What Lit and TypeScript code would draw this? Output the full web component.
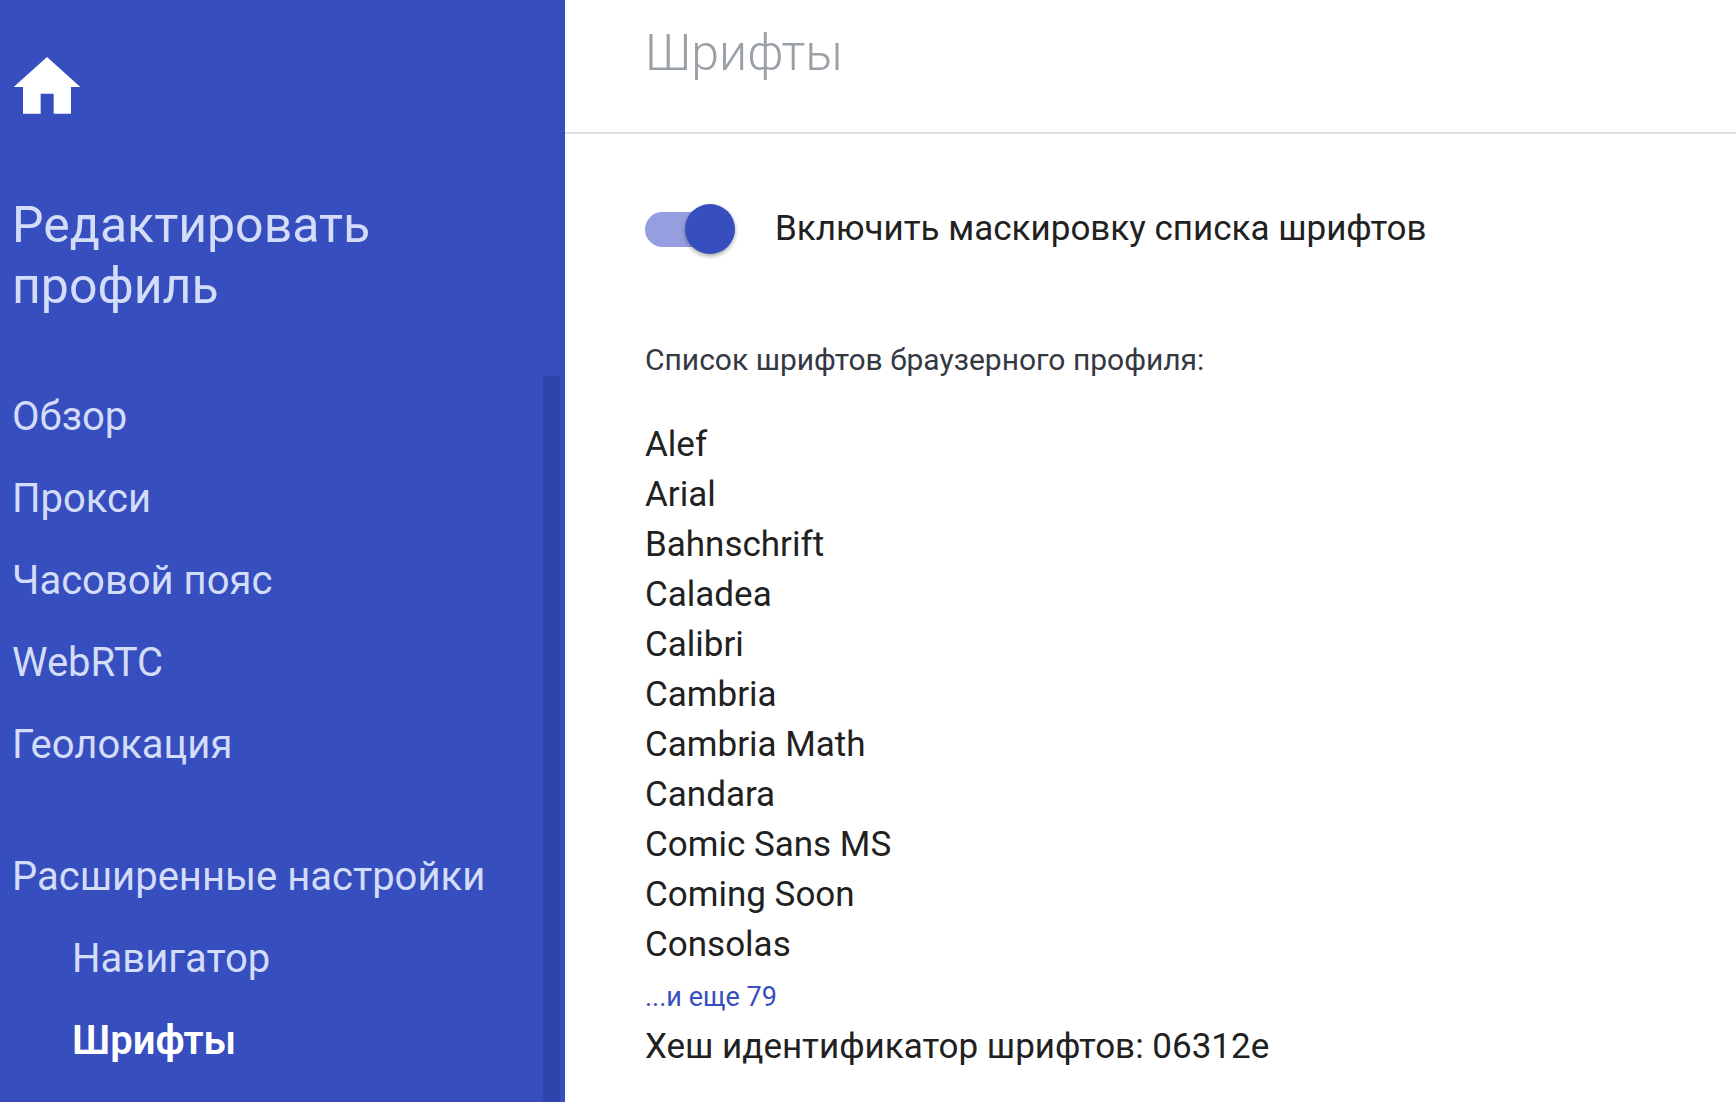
import { LitElement, html, css } from "lit";
import { customElement, state } from "lit/decorators.js";
import { classMap } from "lit/directives/class-map.js";

interface NavItem {
  id: string;
  label: string;
}

const MAIN_ITEMS: NavItem[] = [
  { id: "overview", label: "Обзор" },
  { id: "proxy", label: "Прокси" },
  { id: "timezone", label: "Часовой пояс" },
  { id: "webrtc", label: "WebRTC" },
  { id: "geolocation", label: "Геолокация" },
];

const ADVANCED_ITEMS: NavItem[] = [
  { id: "navigator", label: "Навигатор" },
  { id: "fonts", label: "Шрифты" },
];

const FONTS = [
  "Alef",
  "Arial",
  "Bahnschrift",
  "Caladea",
  "Calibri",
  "Cambria",
  "Cambria Math",
  "Candara",
  "Comic Sans MS",
  "Coming Soon",
  "Consolas",
];

@customElement("profile-sidebar")
export class ProfileSidebar extends LitElement {
  @state() private active = "fonts";

  static styles = css`
    :host {
      display: flex;
      flex-direction: column;
      background: #364ebe;
      color: #d3dcf8;
    }
    .home {
      display: block;
      align-self: flex-start;
      margin: 47px 0 0 7px;
      color: #fff;
    }
    .home-icon {
      display: block;
      width: 80px;
      height: 80px;
      fill: currentColor;
    }
    .title {
      margin: 68px 12px 59px;
      font-size: 50px;
      line-height: 61px;
      font-weight: 400;
    }
    .scroll {
      flex: 1;
      display: flex;
      padding-right: 5px;
    }
    .nav {
      flex: 1;
      padding-left: 12px;
    }
    .track {
      width: 17px;
      background: #2f45ab;
    }
    .list {
      margin: 0;
      padding: 0;
      list-style: none;
    }
    .advanced {
      margin-top: 50px;
    }
    .sub {
      padding-left: 60px;
    }
    .link {
      display: block;
      font-size: 40px;
      line-height: 82px;
      color: inherit;
      text-decoration: none;
      white-space: nowrap;
    }
    .active {
      color: #fff;
      font-weight: 600;
    }
  `;

  private renderItem(item: NavItem) {
    const active = item.id === this.active;
    return html`<li>
      <a
        class=${classMap({ link: true, active })}
        href="#${item.id}"
        aria-current=${active ? "page" : "false"}
        @click=${() => (this.active = item.id)}
        >${item.label}</a
      >
    </li>`;
  }

  render() {
    return html`
      <a class="home" href="#home" aria-label="Главная">
        <svg class="home-icon" viewBox="0 0 24 24" aria-hidden="true">
          <path d="M10.1 20v-6h3.9v6h5.2v-8H22L12 3 2 12h2.8v8z" />
        </svg>
      </a>
      <h1 class="title">Редактировать профиль</h1>
      <div class="scroll">
        <nav class="nav">
          <ul class="list">
            ${MAIN_ITEMS.map((item) => this.renderItem(item))}
          </ul>
          <div class="advanced">
            <a class="link" href="#advanced">Расширенные настройки</a>
            <ul class="list sub">
              ${ADVANCED_ITEMS.map((item) => this.renderItem(item))}
            </ul>
          </div>
        </nav>
        <div class="track"></div>
      </div>
    `;
  }
}

@customElement("app-root")
export class AppRoot extends LitElement {
  @state() private masking = true;

  static styles = css`
    :host {
      display: grid;
      grid-template-columns: 565px minmax(0, 1fr);
      min-height: 100vh;
      background: #fff;
      color: #212121;
      font-family: Roboto, "Open Sans", sans-serif;
    }
    .header {
      padding: 22px 80px 48px;
      border-bottom: 2px solid #e0e0e0;
    }
    .heading {
      margin: 0;
      font-size: 50px;
      line-height: 62px;
      font-weight: 300;
      color: #9aa0a8;
    }
    .content {
      padding: 70px 80px 32px;
      font-size: 35px;
      line-height: 50px;
    }
    .toggle {
      display: flex;
      width: fit-content;
      align-items: center;
      gap: 40px;
      cursor: pointer;
    }
    .switch {
      appearance: none;
      display: flex;
      align-items: center;
      width: 90px;
      height: 50px;
      margin: 0;
      cursor: pointer;
    }
    .switch::before {
      content: "";
      flex: none;
      width: 90px;
      height: 35px;
      border-radius: 18px;
      background: #bdbdbd;
    }
    .switch::after {
      content: "";
      flex: none;
      width: 50px;
      height: 50px;
      margin-left: -90px;
      border-radius: 50%;
      background: #fafafa;
      box-shadow: 0 2px 4px rgba(0, 0, 0, 0.35);
    }
    .switch:checked::before {
      background: #959fdf;
    }
    .switch:checked::after {
      margin-left: -50px;
      background: #364ebe;
    }
    .caption {
      margin: 86px 0 40px;
      font-size: 30px;
      line-height: 40px;
      font-weight: 400;
      color: #343842;
    }
    .fonts {
      margin: 0;
      padding: 0;
      list-style: none;
    }
    .more {
      font-size: 27px;
      color: #364ebe;
      text-decoration: none;
    }
    .hash {
      margin: 0;
    }
  `;

  render() {
    return html`
      <profile-sidebar></profile-sidebar>
      <main>
        <header class="header"><h2 class="heading">Шрифты</h2></header>
        <section class="content">
          <label class="toggle">
            <input
              class="switch"
              type="checkbox"
              role="switch"
              .checked=${this.masking}
              @change=${(e: Event) =>
                (this.masking = (e.target as HTMLInputElement).checked)}
            />
            <span>Включить маскировку списка шрифтов</span>
          </label>
          <h3 class="caption">Список шрифтов браузерного профиля:</h3>
          <ul class="fonts">
            ${FONTS.map((name) => html`<li>${name}</li>`)}
            <li><a class="more" href="#all-fonts">...и еще 79</a></li>
          </ul>
          <p class="hash">Хеш идентификатор шрифтов: 06312e</p>
        </section>
      </main>
    `;
  }
}
